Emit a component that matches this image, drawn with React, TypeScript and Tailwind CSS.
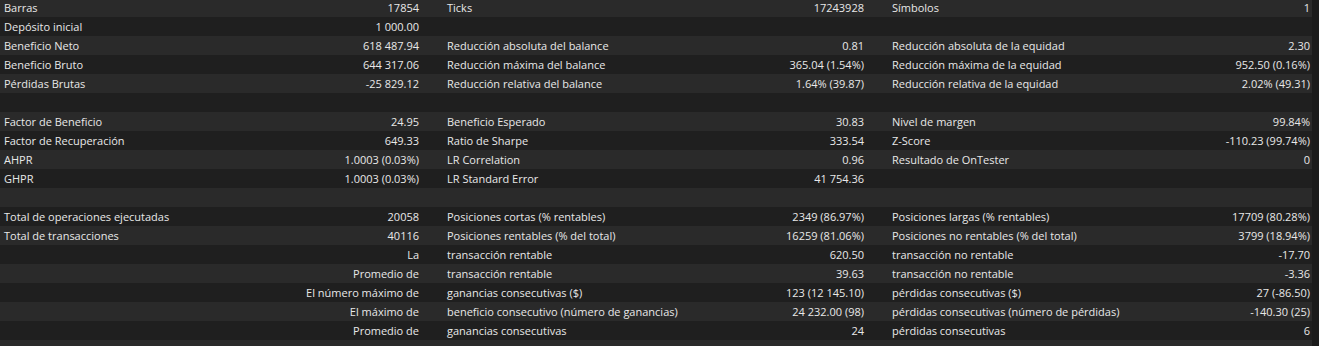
type Cell = [string, string];
type Row = [Cell, Cell, Cell];

const E: Cell = ["", ""];

const rows: Row[] = [
  [["Barras", "17854"], ["Ticks", "17243928"], ["Símbolos", "1"]],
  [["Depósito inicial", "1 000.00"], E, E],
  [
    ["Beneficio Neto", "618 487.94"],
    ["Reducción absoluta del balance", "0.81"],
    ["Reducción absoluta de la equidad", "2.30"],
  ],
  [
    ["Beneficio Bruto", "644 317.06"],
    ["Reducción máxima del balance", "365.04 (1.54%)"],
    ["Reducción máxima de la equidad", "952.50 (0.16%)"],
  ],
  [
    ["Pérdidas Brutas", "-25 829.12"],
    ["Reducción relativa del balance", "1.64% (39.87)"],
    ["Reducción relativa de la equidad", "2.02% (49.31)"],
  ],
  [E, E, E],
  [
    ["Factor de Beneficio", "24.95"],
    ["Beneficio Esperado", "30.83"],
    ["Nivel de margen", "99.84%"],
  ],
  [
    ["Factor de Recuperación", "649.33"],
    ["Ratio de Sharpe", "333.54"],
    ["Z-Score", "-110.23 (99.74%)"],
  ],
  [
    ["AHPR", "1.0003 (0.03%)"],
    ["LR Correlation", "0.96"],
    ["Resultado de OnTester", "0"],
  ],
  [["GHPR", "1.0003 (0.03%)"], ["LR Standard Error", "41 754.36"], E],
  [E, E, E],
  [
    ["Total de operaciones ejecutadas", "20058"],
    ["Posiciones cortas (% rentables)", "2349 (86.97%)"],
    ["Posiciones largas (% rentables)", "17709 (80.28%)"],
  ],
  [
    ["Total de transacciones", "40116"],
    ["Posiciones rentables (% del total)", "16259 (81.06%)"],
    ["Posiciones no rentables (% del total)", "3799 (18.94%)"],
  ],
  [
    ["", "La"],
    ["transacción rentable", "620.50"],
    ["transacción no rentable", "-17.70"],
  ],
  [
    ["", "Promedio de"],
    ["transacción rentable", "39.63"],
    ["transacción no rentable", "-3.36"],
  ],
  [
    ["", "El número máximo de"],
    ["ganancias consecutivas ($)", "123 (12 145.10)"],
    ["pérdidas consecutivas ($)", "27 (-86.50)"],
  ],
  [
    ["", "El máximo de"],
    ["beneficio consecutivo (número de ganancias)", "24 232.00 (98)"],
    ["pérdidas consecutivas (número de pérdidas)", "-140.30 (25)"],
  ],
  [
    ["", "Promedio de"],
    ["ganancias consecutivas", "24"],
    ["pérdidas consecutivas", "6"],
  ],
  [E, E, E],
];

function Pair({ cell, last }: { cell: Cell; last?: boolean }) {
  return (
    <div
      className={`flex items-center justify-between pl-1 pt-px whitespace-nowrap ${
        last ? "pr-[2px]" : "pr-6"
      }`}
    >
      <span>{cell[0]}</span>
      <span>{cell[1]}</span>
    </div>
  );
}

export default function App() {
  return (
    <div
      className="h-[346px] w-[1319px] overflow-hidden bg-[#1c1c1c] text-[11px] text-[#e8e8e8] flex"
      style={{ fontFamily: "'Open Sans', 'Liberation Sans', sans-serif" }}
    >
      <div className="w-[1312px] -mt-[2px]">
        {rows.map((row, i) => (
          <div
            key={i}
            className={`grid grid-cols-[443px_445px_1fr] h-[19px] ${
              i % 2 === 0 ? "bg-[#2a2a2a]" : "bg-[#1f1f1f]"
            }`}
          >
            <Pair cell={row[0]} />
            <Pair cell={row[1]} />
            <Pair cell={row[2]} last />
          </div>
        ))}
      </div>
      <div className="flex-1 bg-[#1b1b1b]" />
    </div>
  );
}
